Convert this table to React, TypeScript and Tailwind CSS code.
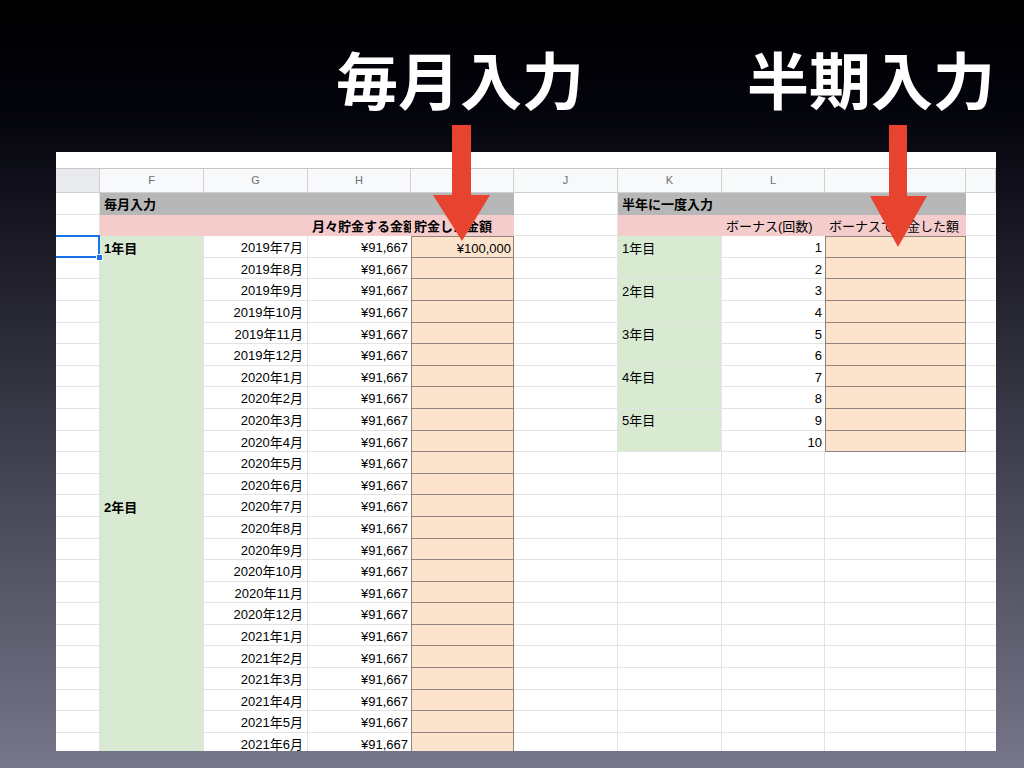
import React from 'react';

const W = {
  E: 'w-[44px]',
  F: 'w-[104px]',
  G: 'w-[104px]',
  H: 'w-[103px]',
  I: 'w-[103px]',
  J: 'w-[104px]',
  K: 'w-[104px]',
  L: 'w-[103px]',
  M: 'w-[141px]',
  N: 'w-[30px]',
};

const grid = 'border-[#e2e3e3]';
const row = 'h-[21.6px] shrink-0 flex items-center pt-[3px] overflow-hidden whitespace-nowrap';
const peach = 'bg-[#fbe3cc] border-l border-r border-b border-[#8f857d]';

const months = Array.from({ length: 24 }, (_, i) => {
  const y = 2019 + Math.floor((6 + i) / 12);
  const m = ((6 + i) % 12) + 1;
  return `${y}年${m}月`;
});

function Cell({ w, className = '', children }: { w: string; className?: string; children?: React.ReactNode }) {
  return <div className={`${w} ${row} ${className}`}>{children}</div>;
}

function HeaderRow() {
  const letters: [string, string][] = [
    ['E', ''], ['F', 'F'], ['G', 'G'], ['H', 'H'], ['I', 'I'], ['J', 'J'], ['K', 'K'], ['L', 'L'], ['M', 'M'], ['N', ''],
  ];
  return (
    <div className="flex h-[25px] border-t border-[#c7c7c7]">
      {letters.map(([k, label]) => (
        <div
          key={k}
          className={`${W[k as keyof typeof W]} shrink-0 flex items-center justify-center border-r border-b border-[#d0d0d0] text-[11px] text-[#6b6f74] ${
            k === 'E' ? 'bg-[#e8eaed]' : 'bg-[#f8f9fa]'
          }`}
        >
          {label}
        </div>
      ))}
    </div>
  );
}

export default function App() {
  return (
    <div className="relative w-[1024px] h-[768px] overflow-hidden bg-[linear-gradient(180deg,#000_0%,#03030c_14%,#77768a_100%)] font-['Liberation_Sans','Noto_Sans_CJK_JP',sans-serif]">
      {/* slide titles */}
      <div className="h-[152px] flex pl-[330px] pt-[47px] gap-[151px]">
        <div className="w-[260px] h-[62px] text-center text-white text-[62px] leading-none font-bold font-['Noto_Sans_CJK_JP',sans-serif]">
          毎月入力
        </div>
        <div className="w-[260px] h-[62px] text-center text-white text-[62px] leading-none font-bold font-['Noto_Sans_CJK_JP',sans-serif]">
          半期入力
        </div>
      </div>

      {/* spreadsheet screenshot */}
      <div className="ml-[56px] w-[940px] h-[599px] overflow-hidden bg-white text-[13px] text-black">
        <div className="h-[16px]" />
        <HeaderRow />

        {/* title row */}
        <div className="flex">
          <Cell w={W.E} className={`border-r border-b ${grid}`} />
          <Cell w="w-[414px]" className="bg-[#b7b7b7] border-b border-[#b7b7b7] pl-[4px] font-bold">
            毎月入力
          </Cell>
          <Cell w={W.J} className={`border-r border-b ${grid}`} />
          <Cell w="w-[348px]" className="bg-[#b7b7b7] border-b border-[#b7b7b7] pl-[4px] font-bold">
            半年に一度入力
          </Cell>
          <Cell w={W.N} className={`border-b ${grid}`} />
        </div>

        {/* pink label row */}
        <div className="flex">
          <Cell w={W.E} className={`border-r border-b ${grid}`} />
          <Cell w={W.F} className="bg-[#f4cccc]" />
          <Cell w={W.G} className="bg-[#f4cccc]" />
          <Cell w={W.H} className="bg-[#f4cccc] pl-[4px] font-bold">
            月々貯金する金額
          </Cell>
          <Cell w={W.I} className="bg-[#f4cccc] pl-[3px] font-bold">
            貯金した金額
          </Cell>
          <Cell w={W.J} className={`border-r border-b ${grid}`} />
          <Cell w={W.K} className="bg-[#f4cccc]" />
          <Cell w={W.L} className="bg-[#f4cccc] pl-[4px]">
            ボーナス(回数)
          </Cell>
          <Cell w={W.M} className="bg-[#f4cccc] pl-[4px]">
            ボーナスで貯金した額
          </Cell>
          <Cell w={W.N} className={`border-b ${grid}`} />
        </div>

        {/* body */}
        <div className="flex">
          {/* column E */}
          <div className="flex flex-col">
            {months.map((m, i) => (
              <Cell key={m} w={W.E} className={`relative overflow-visible border-r border-b ${grid}`}>
                {i === 0 && (
                  <>
                    <div className="absolute -top-px -left-[4px] -right-px -bottom-px border-2 border-[#1a73e8] z-10" />
                    <div className="absolute -right-[4px] -bottom-[4px] w-[7px] h-[7px] bg-[#1a73e8] border border-white z-10" />
                  </>
                )}
              </Cell>
            ))}
          </div>

          {/* column F */}
          <div className="flex flex-col">
            {['1年目', '2年目'].map((y) => (
              <div key={y} className={`${W.F} h-[259.2px] shrink-0 bg-[#d9ead3] border-r ${grid}`}>
                <div className="h-[21.6px] flex items-center pt-[3px] pl-[4px] font-bold">{y}</div>
              </div>
            ))}
          </div>

          {/* column G */}
          <div className="flex flex-col">
            {months.map((m) => (
              <Cell key={m} w={W.G} className={`justify-end pr-[4px] border-r border-b ${grid}`}>
                {m}
              </Cell>
            ))}
          </div>

          {/* column H */}
          <div className="flex flex-col">
            {months.map((m) => (
              <Cell key={m} w={W.H} className={`justify-end pr-[3px] border-b ${grid}`}>
                ¥91,667
              </Cell>
            ))}
          </div>

          {/* column I */}
          <div className="flex flex-col">
            {months.map((m, i) => (
              <Cell key={m} w={W.I} className={`justify-end pr-[2px] ${peach} ${i === 0 ? 'border-t' : ''}`}>
                {i === 0 ? '¥100,000' : ''}
              </Cell>
            ))}
          </div>

          {/* column J */}
          <div className="flex flex-col">
            {months.map((m) => (
              <Cell key={m} w={W.J} className={`border-r border-b ${grid}`} />
            ))}
          </div>

          {/* column K */}
          <div className="flex flex-col">
            {['1年目', '2年目', '3年目', '4年目', '5年目'].map((y) => (
              <div key={y} className={`${W.K} h-[43.2px] shrink-0 bg-[#d9ead3] border-r border-b ${grid}`}>
                <div className="h-[21.6px] flex items-center pt-[3px] pl-[4px]">{y}</div>
              </div>
            ))}
            {months.slice(10).map((m) => (
              <Cell key={m} w={W.K} className={`border-r border-b ${grid}`} />
            ))}
          </div>

          {/* column L */}
          <div className="flex flex-col">
            {months.map((m, i) => (
              <Cell key={m} w={W.L} className={`justify-end pr-[3px] border-b ${grid} ${i >= 10 ? 'border-r' : ''}`}>
                {i < 10 ? i + 1 : ''}
              </Cell>
            ))}
          </div>

          {/* column M */}
          <div className="flex flex-col">
            {months.map((m, i) =>
              i < 10 ? (
                <Cell key={m} w={W.M} className={`${peach} ${i === 0 ? 'border-t' : ''}`} />
              ) : (
                <Cell key={m} w={W.M} className={`border-r border-b ${grid}`} />
              )
            )}
          </div>

          {/* column N */}
          <div className="flex flex-col">
            {months.map((m) => (
              <Cell key={m} w={W.N} className={`border-b ${grid}`} />
            ))}
          </div>
        </div>
      </div>

      {/* red arrows */}
      <svg className="absolute left-0 top-0 pointer-events-none" width="1024" height="768" viewBox="0 0 1024 768">
        <g fill="#e8432e">
          <rect x="452" y="125" width="19" height="72" />
          <polygon points="433,195 490,195 462,241" />
          <rect x="889" y="125" width="18" height="73" />
          <polygon points="870,196 927,196 898,247" />
        </g>
      </svg>
    </div>
  );
}
